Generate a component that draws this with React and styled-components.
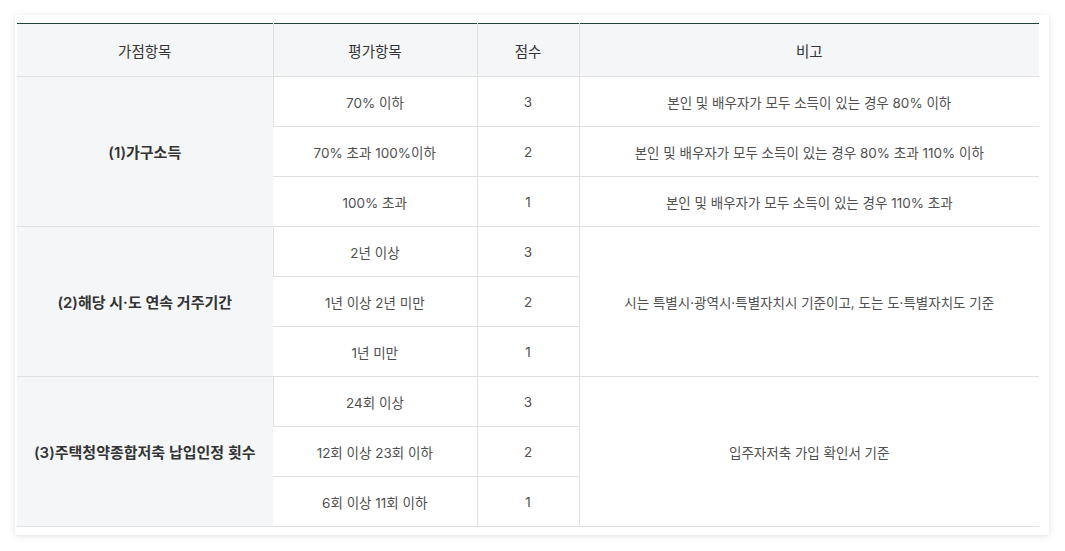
import styled, { createGlobalStyle } from "styled-components";

const GlobalStyle = createGlobalStyle`
  html, body {
    margin: 0;
    padding: 0;
    background: #ffffff;
  }
  body {
    font-family: Inter, "Noto Sans CJK KR", sans-serif;
  }
`;

const Page = styled.div`
  width: 1065px;
  height: 551px;
  padding: 15px 0 0 15px;
  box-sizing: border-box;
`;

const Card = styled.div`
  width: 1034px;
  box-sizing: border-box;
  padding: 8px 11px 8px 2px;
  background: #fff;
  box-shadow: 0 1px 6px rgba(0, 0, 0, 0.12);
`;

const Table = styled.table`
  width: 1022px;
  border-collapse: collapse;
  table-layout: fixed;
  border-top: 1px solid #1d4636;
  border-bottom: 1px solid #9a9a9a;
  font-size: 13.5px;
  color: #505050;
`;

const Th = styled.th`
  height: 52px;
  padding: 0;
  background: #f5f6f8;
  font-size: 14.5px;
  font-weight: 400;
  color: #333;
  text-align: center;
  border-bottom: 1px solid #e0e0e0;
  border-left: 1px solid #e0e0e0;
  &:first-child {
    border-left: none;
  }
`;

const Td = styled.td`
  height: 49px;
  padding: 0;
  text-align: center;
  vertical-align: middle;
  border-bottom: 1px solid #e0e0e0;
  border-left: 1px solid #e0e0e0;
  background: ${(p) => (p.$head ? "#f5f6f8" : "#fff")};
  font-size: ${(p) => (p.$head ? "15px" : "13.5px")};
  font-weight: ${(p) => (p.$head ? 600 : 400)};
  color: ${(p) => (p.$head ? "#333" : "#505050")};
  &:first-child {
    border-left: none;
  }
`;

const groups = [
  {
    title: "(1)가구소득",
    rows: [
      ["70% 이하", "3", "본인 및 배우자가 모두 소득이 있는 경우 80% 이하"],
      ["70% 초과 100%이하", "2", "본인 및 배우자가 모두 소득이 있는 경우 80% 초과 110% 이하"],
      ["100% 초과", "1", "본인 및 배우자가 모두 소득이 있는 경우 110% 초과"],
    ],
  },
  {
    title: "(2)해당 시·도 연속 거주기간",
    note: "시는 특별시·광역시·특별자치시 기준이고, 도는 도·특별자치도 기준",
    rows: [
      ["2년 이상", "3"],
      ["1년 이상 2년 미만", "2"],
      ["1년 미만", "1"],
    ],
  },
  {
    title: "(3)주택청약종합저축 납입인정 횟수",
    note: "입주자저축 가입 확인서 기준",
    rows: [
      ["24회 이상", "3"],
      ["12회 이상 23회 이하", "2"],
      ["6회 이상 11회 이하", "1"],
    ],
  },
];

export default function App() {
  return (
    <>
      <GlobalStyle />
      <Page>
        <Card>
          <Table>
            <colgroup>
              <col style={{ width: 256 }} />
              <col style={{ width: 204 }} />
              <col style={{ width: 102 }} />
              <col />
            </colgroup>
            <thead>
              <tr>
                <Th>가점항목</Th>
                <Th>평가항목</Th>
                <Th>점수</Th>
                <Th>비고</Th>
              </tr>
            </thead>
            <tbody>
              {groups.map((g) =>
                g.rows.map((r, i) => (
                  <tr key={g.title + i}>
                    {i === 0 && (
                      <Td $head rowSpan={g.rows.length}>
                        {g.title}
                      </Td>
                    )}
                    <Td>{r[0]}</Td>
                    <Td>{r[1]}</Td>
                    {g.note ? (
                      i === 0 && <Td rowSpan={g.rows.length}>{g.note}</Td>
                    ) : (
                      <Td>{r[2]}</Td>
                    )}
                  </tr>
                ))
              )}
            </tbody>
          </Table>
        </Card>
      </Page>
    </>
  );
}
